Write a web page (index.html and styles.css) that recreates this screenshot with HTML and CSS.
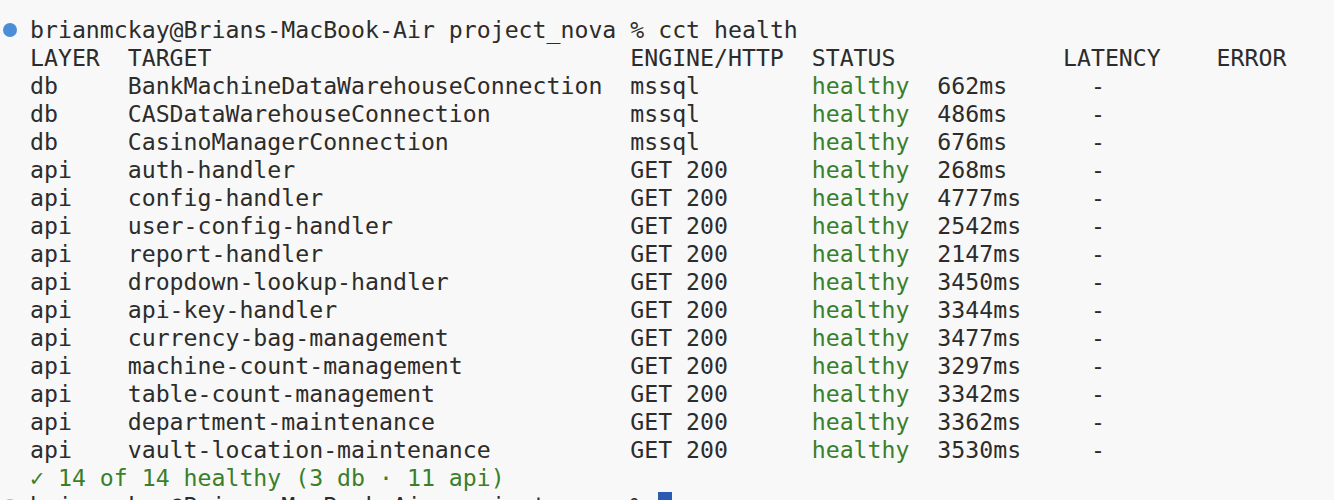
FILE: index.html
```html
<!DOCTYPE html>
<html lang="en">
<head>
<meta charset="utf-8">
<title>cct health</title>
<link rel="stylesheet" href="styles.css">
</head>
<body>
<div class="term">
  <div class="line prompt"><span class="dot dot-blue"></span><span>brianmckay@Brians-MacBook-Air project_nova % cct health</span></div>
  <div class="line"><span class="c7">LAYER</span><span class="c36">TARGET</span><span class="c13">ENGINE/HTTP</span><span class="c18">STATUS</span><span class="c11">LATENCY</span><span>ERROR</span></div>
  <div class="line"><span class="c7">db</span><span class="c36">BankMachineDataWarehouseConnection</span><span class="c13">mssql</span><span class="c9 ok">healthy</span><span class="c11">662ms</span><span>-</span></div>
  <div class="line"><span class="c7">db</span><span class="c36">CASDataWarehouseConnection</span><span class="c13">mssql</span><span class="c9 ok">healthy</span><span class="c11">486ms</span><span>-</span></div>
  <div class="line"><span class="c7">db</span><span class="c36">CasinoManagerConnection</span><span class="c13">mssql</span><span class="c9 ok">healthy</span><span class="c11">676ms</span><span>-</span></div>
  <div class="line"><span class="c7">api</span><span class="c36">auth-handler</span><span class="c13">GET 200</span><span class="c9 ok">healthy</span><span class="c11">268ms</span><span>-</span></div>
  <div class="line"><span class="c7">api</span><span class="c36">config-handler</span><span class="c13">GET 200</span><span class="c9 ok">healthy</span><span class="c11">4777ms</span><span>-</span></div>
  <div class="line"><span class="c7">api</span><span class="c36">user-config-handler</span><span class="c13">GET 200</span><span class="c9 ok">healthy</span><span class="c11">2542ms</span><span>-</span></div>
  <div class="line"><span class="c7">api</span><span class="c36">report-handler</span><span class="c13">GET 200</span><span class="c9 ok">healthy</span><span class="c11">2147ms</span><span>-</span></div>
  <div class="line"><span class="c7">api</span><span class="c36">dropdown-lookup-handler</span><span class="c13">GET 200</span><span class="c9 ok">healthy</span><span class="c11">3450ms</span><span>-</span></div>
  <div class="line"><span class="c7">api</span><span class="c36">api-key-handler</span><span class="c13">GET 200</span><span class="c9 ok">healthy</span><span class="c11">3344ms</span><span>-</span></div>
  <div class="line"><span class="c7">api</span><span class="c36">currency-bag-management</span><span class="c13">GET 200</span><span class="c9 ok">healthy</span><span class="c11">3477ms</span><span>-</span></div>
  <div class="line"><span class="c7">api</span><span class="c36">machine-count-management</span><span class="c13">GET 200</span><span class="c9 ok">healthy</span><span class="c11">3297ms</span><span>-</span></div>
  <div class="line"><span class="c7">api</span><span class="c36">table-count-management</span><span class="c13">GET 200</span><span class="c9 ok">healthy</span><span class="c11">3342ms</span><span>-</span></div>
  <div class="line"><span class="c7">api</span><span class="c36">department-maintenance</span><span class="c13">GET 200</span><span class="c9 ok">healthy</span><span class="c11">3362ms</span><span>-</span></div>
  <div class="line"><span class="c7">api</span><span class="c36">vault-location-maintenance</span><span class="c13">GET 200</span><span class="c9 ok">healthy</span><span class="c11">3530ms</span><span>-</span></div>
  <div class="line ok">✓ 14 of 14 healthy (3 db · 11 api)</div>
  <div class="line prompt"><span class="dot dot-gray"></span><span>brianmckay@Brians-MacBook-Air project_nova % </span><span class="cursor"></span></div>
</div>
</body>
</html>
```

FILE: styles.css
```css
html, body {
  margin: 0;
  padding: 0;
  background: #f8f8f8;
  height: 100%;
  overflow: hidden;
}

.term {
  padding: 16px 0 0 30px;
  font-family: "DejaVu Sans Mono", "Liberation Mono", monospace;
  font-size: 23.2px;
  line-height: 28px;
  color: #2c2c2c;
}

.line {
  display: flex;
  white-space: pre;
  height: 28px;
}

.line > span {
  display: inline-block;
  flex: none;
}

.c7 { width: 7ch; }
.c9 { width: 9ch; }
.c11 { width: 11ch; }
.c13 { width: 13ch; }
.c18 { width: 18ch; }
.c36 { width: 36ch; }

.ok {
  color: #3a7f2a;
}

.prompt {
  margin-left: -27px;
  align-items: center;
}

.dot {
  width: 14px;
  height: 14px;
  border-radius: 50%;
  margin-right: 13px;
}

.dot-blue {
  background: #4a8ed8;
}

.dot-gray {
  background: #b5b5b5;
}

.cursor {
  width: 1ch;
  height: 28px;
  background: #2a5bb2;
  align-self: flex-start;
}
```
